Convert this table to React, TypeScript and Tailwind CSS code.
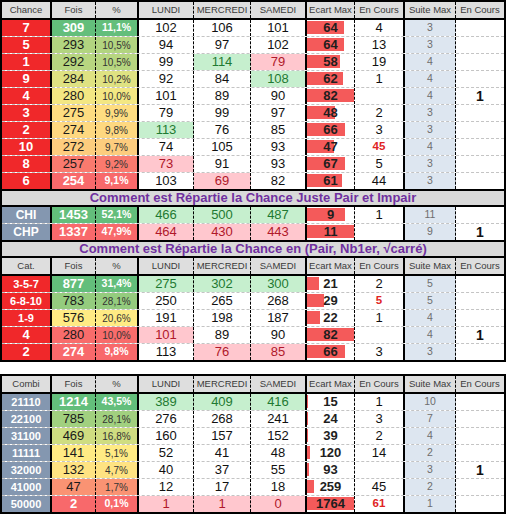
import React from 'react';

type HL = '' | 'g' | 'r';
type Row = {
  label: string;
  fois: number;
  pct: string;
  d: [number, number, number];
  hl: [HL, HL, HL];
  ecart: number;
  cours: string;
  red?: boolean;
  suite: string;
  cours2: string;
};

const COLS = [
  'w-[50px] border-r-2 border-r-black',
  'w-[44px] border-r border-dashed border-r-black',
  'w-[43px] border-r-2 border-r-black',
  'w-[55px] border-r border-dashed border-r-black',
  'w-[57px] border-r border-dashed border-r-black',
  'w-[56px] border-r-2 border-r-black',
  'w-[48px] border-r border-dashed border-r-black',
  'w-[50px] border-r-2 border-r-black',
  'w-[51px] border-r border-dashed border-r-black',
  'w-[48px]',
];

const SANS = "font-['Liberation_Sans',Arial,sans-serif]";

function mix(a: number[], b: number[], t: number) {
  const c = a.map((x, i) => Math.round(x + (b[i] - x) * t));
  return `rgb(${c[0]},${c[1]},${c[2]})`;
}
const GREEN = [99, 190, 123];
const YELLOW = [255, 235, 132];
const RED = [248, 105, 107];

function scaleColor(v: number, vals: number[]) {
  const s = [...vals].sort((a, b) => a - b);
  const min = s[0];
  const max = s[s.length - 1];
  const n = s.length;
  const mid = n % 2 ? s[(n - 1) / 2] : (s[n / 2 - 1] + s[n / 2]) / 2;
  if (v >= mid) {
    const t = max === mid ? 1 : (v - mid) / (max - mid);
    return mix(YELLOW, GREEN, t);
  }
  const t = mid === min ? 1 : (mid - v) / (mid - min);
  return mix(YELLOW, RED, t);
}

const t1: Row[] = [
  { label: '7', fois: 309, pct: '11,1%', d: [102, 106, 101], hl: ['', '', ''], ecart: 64, cours: '4', suite: '3', cours2: '' },
  { label: '5', fois: 293, pct: '10,5%', d: [94, 97, 102], hl: ['', '', ''], ecart: 64, cours: '13', suite: '3', cours2: '' },
  { label: '1', fois: 292, pct: '10,5%', d: [99, 114, 79], hl: ['', 'g', 'r'], ecart: 58, cours: '19', suite: '4', cours2: '' },
  { label: '9', fois: 284, pct: '10,2%', d: [92, 84, 108], hl: ['', '', 'g'], ecart: 62, cours: '1', suite: '4', cours2: '' },
  { label: '4', fois: 280, pct: '10,0%', d: [101, 89, 90], hl: ['', '', ''], ecart: 82, cours: '', suite: '4', cours2: '1' },
  { label: '3', fois: 275, pct: '9,9%', d: [79, 99, 97], hl: ['', '', ''], ecart: 48, cours: '2', suite: '3', cours2: '' },
  { label: '2', fois: 274, pct: '9,8%', d: [113, 76, 85], hl: ['g', '', ''], ecart: 66, cours: '3', suite: '3', cours2: '' },
  { label: '10', fois: 272, pct: '9,7%', d: [74, 105, 93], hl: ['', '', ''], ecart: 47, cours: '45', red: true, suite: '4', cours2: '' },
  { label: '8', fois: 257, pct: '9,2%', d: [73, 91, 93], hl: ['r', '', ''], ecart: 67, cours: '5', suite: '3', cours2: '' },
  { label: '6', fois: 254, pct: '9,1%', d: [103, 69, 82], hl: ['', 'r', ''], ecart: 61, cours: '44', suite: '3', cours2: '' },
];

const t2: Row[] = [
  { label: 'CHI', fois: 1453, pct: '52,1%', d: [466, 500, 487], hl: ['g', 'g', 'g'], ecart: 9, cours: '1', suite: '11', cours2: '' },
  { label: 'CHP', fois: 1337, pct: '47,9%', d: [464, 430, 443], hl: ['r', 'r', 'r'], ecart: 11, cours: '', suite: '9', cours2: '1' },
];

const t3: Row[] = [
  { label: '3-5-7', fois: 877, pct: '31,4%', d: [275, 302, 300], hl: ['g', 'g', 'g'], ecart: 21, cours: '2', suite: '5', cours2: '' },
  { label: '6-8-10', fois: 783, pct: '28,1%', d: [250, 265, 268], hl: ['', '', ''], ecart: 29, cours: '5', red: true, suite: '5', cours2: '' },
  { label: '1-9', fois: 576, pct: '20,6%', d: [191, 198, 187], hl: ['', '', ''], ecart: 22, cours: '1', suite: '4', cours2: '' },
  { label: '4', fois: 280, pct: '10,0%', d: [101, 89, 90], hl: ['r', '', ''], ecart: 82, cours: '', suite: '4', cours2: '1' },
  { label: '2', fois: 274, pct: '9,8%', d: [113, 76, 85], hl: ['', 'r', 'r'], ecart: 66, cours: '3', suite: '3', cours2: '' },
];

const t4: Row[] = [
  { label: '21110', fois: 1214, pct: '43,5%', d: [389, 409, 416], hl: ['g', 'g', 'g'], ecart: 15, cours: '1', suite: '10', cours2: '' },
  { label: '22100', fois: 785, pct: '28,1%', d: [276, 268, 241], hl: ['', '', ''], ecart: 24, cours: '3', suite: '7', cours2: '' },
  { label: '31100', fois: 469, pct: '16,8%', d: [160, 157, 152], hl: ['', '', ''], ecart: 39, cours: '2', suite: '4', cours2: '' },
  { label: '11111', fois: 141, pct: '5,1%', d: [52, 41, 48], hl: ['', '', ''], ecart: 120, cours: '14', suite: '2', cours2: '' },
  { label: '32000', fois: 132, pct: '4,7%', d: [40, 37, 55], hl: ['', '', ''], ecart: 93, cours: '', suite: '3', cours2: '1' },
  { label: '41000', fois: 47, pct: '1,7%', d: [12, 17, 18], hl: ['', '', ''], ecart: 259, cours: '45', suite: '2', cours2: '' },
  { label: '50000', fois: 2, pct: '0,1%', d: [1, 1, 0], hl: ['r', 'r', 'r'], ecart: 1764, cours: '61', red: true, suite: '1', cours2: '' },
];

function Header({ first }: { first: string }) {
  const names = [first, 'Fois', '%', 'LUNDI', 'MERCREDI', 'SAMEDI', 'Ecart Max', 'En Cours', 'Suite Max', 'En Cours'];
  return (
    <div className={`flex h-[18px] border-b-2 border-b-black bg-[#dedede] ${SANS} text-[9.5px] text-[#3a3a3a]`}>
      {names.map((n, i) => (
        <div key={i} className={`${COLS[i]} flex h-full items-center justify-center whitespace-nowrap`}>
          {n}
        </div>
      ))}
    </div>
  );
}

function Title({ text }: { text: string }) {
  return (
    <div className={`flex h-[18px] items-center justify-center border-y-2 border-y-black bg-[#d9d9d9] ${SANS} text-[13px] font-bold text-[#7030a0]`}>
      {text}
    </div>
  );
}

function Section({ rows, kind }: { rows: Row[]; kind: 'red' | 'slate' }) {
  const vals = rows.map((r) => r.fois);
  const maxE = Math.max(...rows.map((r) => r.ecart));
  return (
    <div>
      {rows.map((r, idx) => {
        const last = idx === rows.length - 1;
        const extreme = idx === 0 || last;
        const bg = scaleColor(r.fois, vals);
        const labelCls =
          kind === 'red'
            ? `bg-[#f0282a] ${r.label.length > 2 ? 'text-[11px]' : 'text-[13px]'}`
            : `bg-[#8497b0] ${r.label.length > 3 ? 'text-[11px]' : 'text-[12px]'}`;
        return (
          <div key={idx} className={`flex ${last ? 'h-[16px]' : 'h-[17px] border-b border-dashed border-b-[#c4c4c4]'}`}>
            <div className={`${COLS[0]} ${labelCls} ${SANS} flex h-full items-center justify-center font-bold text-white`}>
              {r.label}
            </div>
            <div
              className={`${COLS[1]} ${SANS} flex h-full items-center justify-center text-[13px] ${extreme ? 'font-bold text-white' : 'text-[#1a1a1a]'}`}
              style={{ backgroundColor: bg }}
            >
              {r.fois}
            </div>
            <div
              className={`${COLS[2]} ${SANS} flex h-full items-center justify-center ${extreme ? 'text-[10.5px] font-bold text-white' : 'text-[10px] text-[#333]'}`}
              style={{ backgroundColor: bg }}
            >
              {r.pct}
            </div>
            {r.d.map((v, j) => {
              const h = r.hl[j];
              const c = h === 'g' ? 'bg-[#c6efce] text-[#1f7a32]' : h === 'r' ? 'bg-[#ffc7ce] text-[#b0182a]' : 'bg-white text-[#111]';
              return (
                <div key={j} className={`${COLS[3 + j]} ${SANS} ${c} flex h-full items-center justify-center text-[13px]`}>
                  {v}
                </div>
              );
            })}
            <div className={`${COLS[6]} relative flex h-full items-center justify-center bg-white`}>
              <div className="absolute left-0 top-[1px] bottom-[2px] bg-[#f45a5a]" style={{ width: `${(r.ecart / maxE) * 47}px` }} />
              <span className={`relative ${SANS} text-[13px] font-bold text-[#1e1e1e]`}>{r.ecart}</span>
            </div>
            <div
              className={`${COLS[7]} ${SANS} flex h-full items-center justify-center bg-white ${
                r.red ? 'text-[11.5px] font-bold text-[#e02424]' : 'text-[13px] text-[#111]'
              }`}
            >
              {r.cours}
            </div>
            <div className={`${COLS[8]} ${SANS} flex h-full items-center justify-center bg-[#dde6f0] text-[10.5px] text-[#6e6e6e]`}>
              {r.suite}
            </div>
            <div className={`${COLS[9]} ${SANS} flex h-full items-center justify-center bg-white text-[14px] font-bold text-[#111]`}>
              {r.cours2}
            </div>
          </div>
        );
      })}
    </div>
  );
}

export default function App() {
  return (
    <div className="min-h-[515px] w-[508px] bg-white">
      <div className="w-[506px] border-2 border-black">
        <Header first="Chance" />
        <Section rows={t1} kind="red" />
        <Title text="Comment est Répartie la Chance Juste Pair et Impair" />
        <Section rows={t2} kind="slate" />
        <Title text="Comment est Répartie la Chance en (Pair, Nb1er, √carré)" />
        <Header first="Cat." />
        <Section rows={t3} kind="red" />
      </div>
      <div className="mt-[12px] w-[506px] border-2 border-black">
        <Header first="Combi" />
        <Section rows={t4} kind="slate" />
      </div>
    </div>
  );
}
